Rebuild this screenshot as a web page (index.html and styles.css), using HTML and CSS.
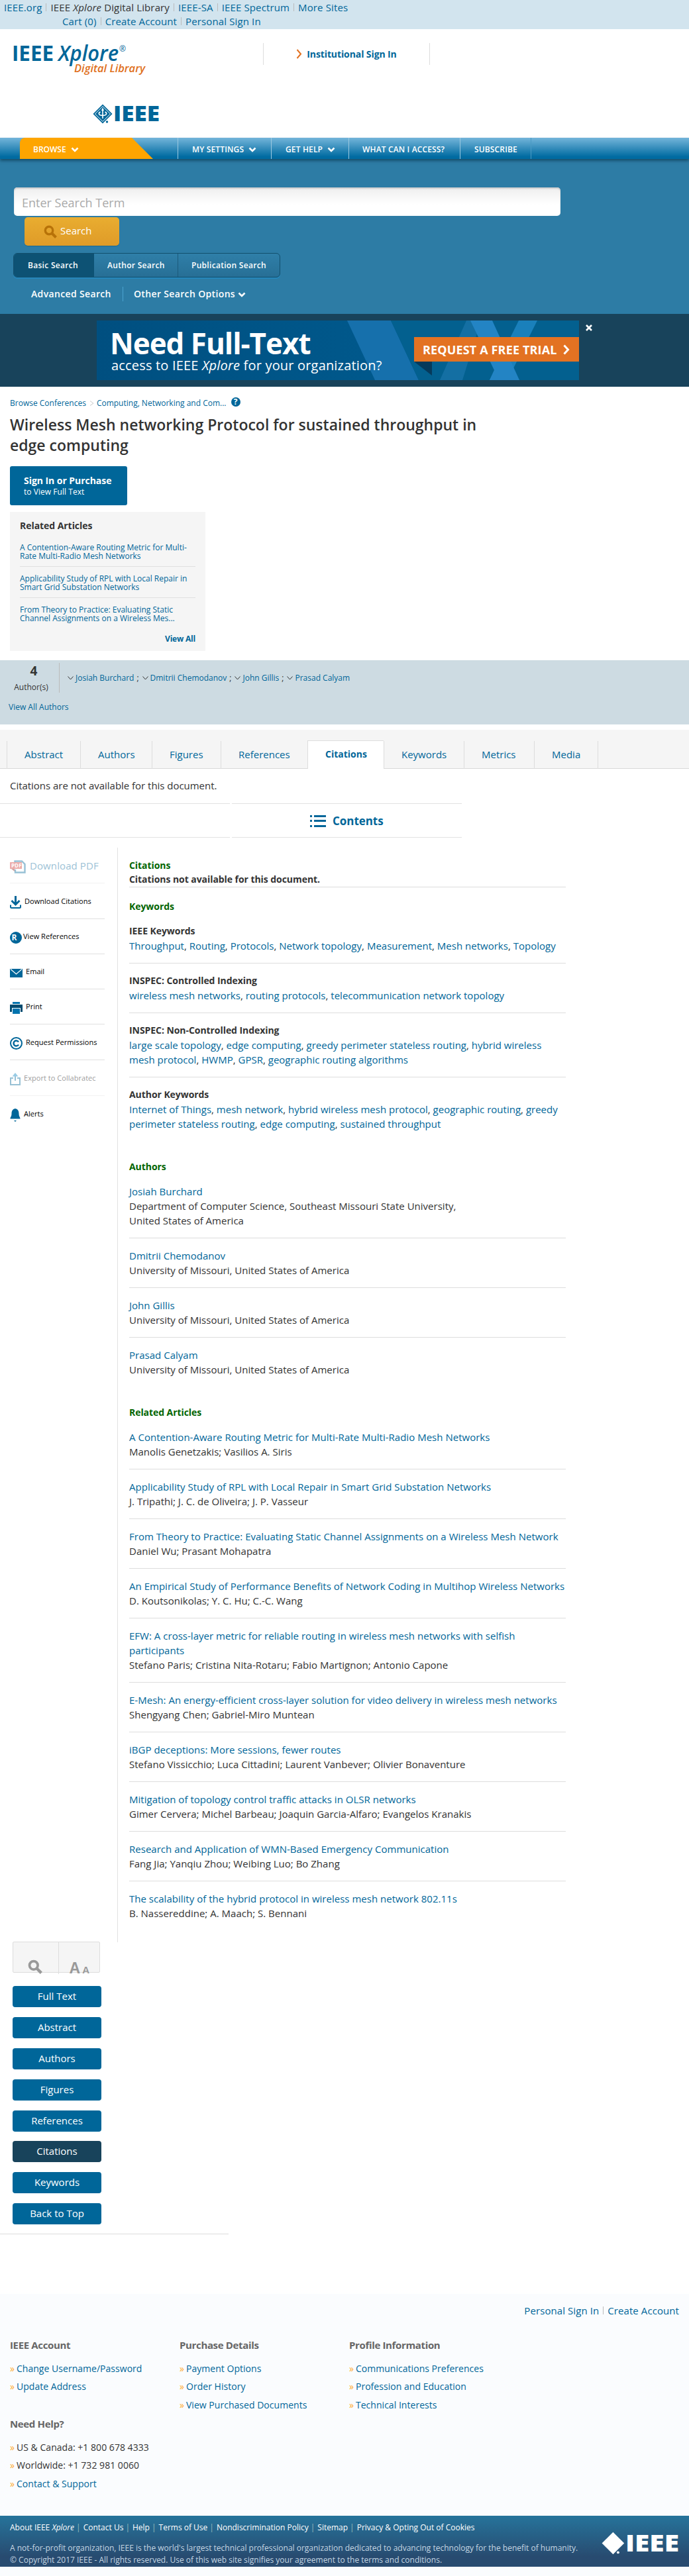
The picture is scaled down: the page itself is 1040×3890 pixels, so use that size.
FILE: index.html
```
<!DOCTYPE html>
<html lang="en">
<head>
<meta charset="utf-8">
<title>IEEE Xplore - Wireless Mesh networking Protocol</title>
<link rel="stylesheet" href="styles.css">
</head>
<body>
<svg width="0" height="0" class="defs">
  <symbol id="kite" viewBox="0 0 30 30">
    <path d="M15 0.5 29.500 15 15 29.500 0.500 15Z" fill="currentColor"/>
    <path class="kite" d="M15 3.500 26.500 15 15 26.500 3.500 15Z"/>
    <path class="kite thick" d="M15 7.500V22M11.500 12C8 13.500 8.500 17.500 15 17.500S22 13.500 18.500 12"/>
    <path class="kite-fill" d="M15 5.500 17 10H13Z"/>
    <circle cx="21.500" cy="27" r="1.700" fill="currentColor"/>
  </symbol>
  <symbol id="chev" viewBox="0 0 12 8"><path d="M1.500 1.500 6 6 10.500 1.500" fill="none" stroke="currentColor" stroke-width="2.600"/></symbol>
  <symbol id="caret" viewBox="0 0 9 6"><path d="M.5 .5 4.500 5 8.500 .5" fill="none" stroke="currentColor"/></symbol>
  <symbol id="lens" viewBox="0 0 20 20"><circle cx="8" cy="8" r="5.700" fill="none" stroke="currentColor" stroke-width="3.400"/><path d="M12.500 12.500 18.500 18.500" stroke="currentColor" stroke-width="4"/></symbol>
</svg>

<div class="topbar">
  <ul class="links first">
    <li>IEEE.org</li><li class="dark"><span>IEEE <i>Xplore</i> Digital Library</span></li><li>IEEE-SA</li><li>IEEE Spectrum</li><li>More Sites</li>
  </ul>
  <ul class="links second">
    <li>Cart (0)</li><li>Create Account</li><li>Personal Sign In</li>
  </ul>
</div>

<header class="head">
  <div class="head-row">
    <svg class="xplore" width="204" height="52" viewBox="0 0 204 52">
      <text x="-2" y="27" font-size="33" font-weight="700" textLength="63" lengthAdjust="spacingAndGlyphs" fill="#069">IEEE</text>
      <text x="68" y="27" font-size="33" font-weight="600" font-style="italic" textLength="91" lengthAdjust="spacingAndGlyphs" fill="#069">Xplore</text>
      <text x="160" y="13" font-size="12" fill="#069">®</text>
      <text x="92" y="44" font-size="17" font-weight="600" font-style="italic" textLength="107" lengthAdjust="spacingAndGlyphs" fill="#e07020">Digital Library</text>
    </svg>
    <div class="inst">
      <svg width="9" height="15" viewBox="0 0 9 15"><path d="M1.500 1 7 7.500 1.500 14" fill="none" stroke="#e37222" stroke-width="2"/></svg>
      <b>Institutional Sign In</b>
    </div>
  </div>
  <svg class="ieee-logo" width="102" height="30" viewBox="0 0 102 30"><use href="#kite" width="30" height="30"/><text x="31" y="26" font-size="31" font-weight="800" textLength="70" lengthAdjust="spacingAndGlyphs" fill="currentColor">IEEE</text></svg>
</header>

<nav class="nav">
  <div class="browse">BROWSE <svg width="12" height="8"><use href="#chev"/></svg></div>
  <ul>
    <li>MY SETTINGS <svg width="12" height="8"><use href="#chev"/></svg></li>
    <li>GET HELP <svg width="12" height="8"><use href="#chev"/></svg></li>
    <li>WHAT CAN I ACCESS?</li>
    <li>SUBSCRIBE</li>
  </ul>
</nav>

<section class="search">
  <div class="field">Enter Search Term</div>
  <div class="go"><svg width="20" height="20"><use href="#lens"/></svg>Search</div>
  <ul class="modes"><li class="on">Basic Search</li><li>Author Search</li><li>Publication Search</li></ul>
  <div class="more"><span>Advanced Search</span><span>Other Search Options <svg width="12" height="8"><use href="#chev"/></svg></span></div>
</section>

<section class="banner">
  <div class="ad">
    <svg class="ad-art" width="728" height="90" viewBox="0 0 728 90">
      <path d="M378 0H444L486 90H420Z" fill="#1670ac"/>
      <path d="M444 0H728V90H486Z" fill="#03608f"/>
      <path d="M558 0H580L552 90H518Z" fill="#146fa3"/>
      <path d="M637 0H665L620 90H593L600 75Z" fill="#1a80bb"/>
      <path d="M564 0H597L638 90H593L600 75Z" fill="#2384c4"/>
      <path d="M479 62H506V83Z" fill="#063a5b"/>
    </svg>
    <div class="ad-text">
      <div class="ad-title">Need Full-Text</div>
      <div class="ad-sub">access to IEEE <i>Xplore</i> for your organization?</div>
    </div>
    <div class="ad-cta">REQUEST A FREE TRIAL <svg width="10" height="16" viewBox="0 0 10 16"><path d="M1.500 1.500 7.500 8 1.500 14.500" fill="none" stroke="#fff" stroke-width="3"/></svg></div>
  </div>
  <svg class="close" width="10" height="10" viewBox="0 0 10 10"><path d="M1 1 9 9M9 1 1 9" stroke="#fff" stroke-width="2.600"/></svg>
</section>

<section class="doc">
  <div class="crumbs"><a>Browse Conferences</a><svg width="7" height="8" viewBox="0 0 7 8"><path d="M1 .5 6 4 1 7.500" fill="none" stroke="#ccc"/></svg><a>Computing, Networking and Com...</a><span class="help">?</span></div>
  <h1>Wireless Mesh networking Protocol for sustained throughput in<br>edge computing</h1>
  <div class="buy"><b>Sign In or Purchase</b><span>to View Full Text</span></div>
  <div class="related">
    <h2>Related Articles</h2>
    <a>A Contention-Aware Routing Metric for Multi-<br>Rate Multi-Radio Mesh Networks</a>
    <a>Applicability Study of RPL with Local Repair in<br>Smart Grid Substation Networks</a>
    <a>From Theory to Practice: Evaluating Static<br>Channel Assignments on a Wireless Mes...</a>
    <b>View All</b>
  </div>
</section>

<section class="authors">
  <div class="authors-row">
    <div class="count"><b>4</b><span>Author(s)</span></div>
    <div class="names">
      <svg width="9" height="6"><use href="#caret"/></svg><a>Josiah Burchard</a><i>;</i>
      <svg width="9" height="6"><use href="#caret"/></svg><a>Dmitrii Chemodanov</a><i>;</i>
      <svg width="9" height="6"><use href="#caret"/></svg><a>John Gillis</a><i>;</i>
      <svg width="9" height="6"><use href="#caret"/></svg><a>Prasad Calyam</a>
    </div>
  </div>
  <a class="all">View All Authors</a>
</section>

<ul class="tabs"><li>Abstract</li><li>Authors</li><li>Figures</li><li>References</li><li class="on">Citations</li><li>Keywords</li><li>Metrics</li><li>Media</li></ul>
<p class="none">Citations are not available for this document.</p>

<div class="contents">
  <div></div>
  <div><svg width="24" height="18" viewBox="0 0 24 18"><path d="M0 1.500H3M6 1.500H24M0 8.500H3M6 8.500H24M0 16.500H3M6 16.500H24" stroke="#069" stroke-width="3"/></svg><b>Contents</b></div>
</div>

<div class="body">
  <aside class="tools">
    <div class="tool pdf faded"><svg width="24" height="20" viewBox="0 0 24 20"><path d="M7.500 3V1.500H18L22.500 6V18.500H8V14" fill="none" stroke="#069" stroke-width="2.400"/><path d="M0 3H18V13H0Z" fill="#d0312d"/><path d="M2 13H7V17Z" fill="#8d1f1c"/><text x="2" y="11" font-size="8" font-weight="700" fill="#fff">PDF</text></svg>Download PDF</div>
    <div class="tool"><svg width="17" height="19" viewBox="0 0 17 19"><path d="M8.500 0V12M2.500 7 8.500 13 14.500 7" fill="none" stroke="#069" stroke-width="3"/><path d="M1 13.500V17Q1 18 2.500 18H14.500Q16 18 16 17V13.500" fill="none" stroke="#069" stroke-width="2"/></svg>Download Citations</div>
    <div class="tool s t2"><svg width="18" height="18" viewBox="0 0 18 18"><circle cx="9" cy="9" r="9" fill="#069"/><text x="2.500" y="13" font-size="12" font-weight="700" fill="#fff">R</text></svg>View References</div>
    <div class="tool s"><svg width="19" height="13" viewBox="0 0 19 13"><path d="M0 0H19V13H0Z" fill="#069"/><path d="M1 .5 9.500 8 18 .5" fill="none" stroke="#fff" stroke-width="1.200"/></svg>Email</div>
    <div class="tool s"><svg width="19" height="18" viewBox="0 0 19 18"><path d="M4 0H15V3H4Z" fill="#0073ae"/><path d="M0 4H19V15H16V9H3V15H0Z" fill="#004b70"/><path d="M4 10H15V18H4Z" fill="#0073ae"/></svg>Print</div>
    <div class="tool"><svg width="19" height="19" viewBox="0 0 19 19"><circle cx="9.500" cy="9.500" r="8.500" fill="none" stroke="#069" stroke-width="2"/><path d="M13 7.500A4 4 0 1 0 13 11.500" fill="none" stroke="#069" stroke-width="2.400"/></svg>Request Permissions</div>
    <div class="tool faded"><svg width="16" height="19" viewBox="0 0 16 19"><path d="M5 8H1V18H15V8H11" fill="none" stroke="#069" stroke-width="2"/><path d="M8 3V12" stroke="#069" stroke-width="2"/><path d="M8 0 12.500 5.500H3.500Z" fill="#0080c0"/></svg>Export to Collabratec</div>
    <div class="tool last"><svg width="16" height="20" viewBox="0 0 16 20"><path d="M8 0C3.500 1 2.500 4 2.500 8 2.500 12 .5 13 .5 15.500H15.500C15.500 13 13.500 12 13.500 8 13.500 4 12.500 1 8 0Z" fill="#069"/><path d="M6 18H10L8 20Z" fill="#069"/></svg>Alerts</div>
  </aside>

  <main class="main">
    <div class="cit"><h3>Citations</h3><b>Citations not available for this document.</b></div>
    <h3 class="kw">Keywords</h3>
    <div class="item"><h4>IEEE Keywords</h4><p><a>Throughput</a>, <a>Routing</a>, <a>Protocols</a>, <a>Network topology</a>, <a>Measurement</a>, <a>Mesh networks</a>, <a>Topology</a></p></div>
    <div class="item"><h4>INSPEC: Controlled Indexing</h4><p><a>wireless mesh networks</a>, <a>routing protocols</a>, <a>telecommunication network topology</a></p></div>
    <div class="item"><h4>INSPEC: Non-Controlled Indexing</h4><p><a>large scale topology</a>, <a>edge computing</a>, <a>greedy perimeter stateless routing</a>, <a>hybrid wireless<br>mesh protocol</a>, <a>HWMP</a>, <a>GPSR</a>, <a>geographic routing algorithms</a></p></div>
    <div class="item end"><h4>Author Keywords</h4><p><a>Internet of Things</a>, <a>mesh network</a>, <a>hybrid wireless mesh protocol</a>, <a>geographic routing</a>, <a>greedy<br>perimeter stateless routing</a>, <a>edge computing</a>, <a>sustained throughput</a></p></div>
    <h3>Authors</h3>
    <div class="item"><a>Josiah Burchard</a><p>Department of Computer Science, Southeast Missouri State University,<br>United States of America</p></div>
    <div class="item"><a>Dmitrii Chemodanov</a><p>University of Missouri, United States of America</p></div>
    <div class="item"><a>John Gillis</a><p>University of Missouri, United States of America</p></div>
    <div class="item end"><a>Prasad Calyam</a><p>University of Missouri, United States of America</p></div>
    <h3>Related Articles</h3>
    <div class="item"><a>A Contention-Aware Routing Metric for Multi-Rate Multi-Radio Mesh Networks</a><p>Manolis Genetzakis; Vasilios A. Siris</p></div>
    <div class="item"><a>Applicability Study of RPL with Local Repair in Smart Grid Substation Networks</a><p>J. Tripathi; J. C. de Oliveira; J. P. Vasseur</p></div>
    <div class="item"><a>From Theory to Practice: Evaluating Static Channel Assignments on a Wireless Mesh Network</a><p>Daniel Wu; Prasant Mohapatra</p></div>
    <div class="item"><a>An Empirical Study of Performance Benefits of Network Coding in Multihop Wireless Networks</a><p>D. Koutsonikolas; Y. C. Hu; C.-C. Wang</p></div>
    <div class="item"><a>EFW: A cross-layer metric for reliable routing in wireless mesh networks with selfish<br>participants</a><p>Stefano Paris; Cristina Nita-Rotaru; Fabio Martignon; Antonio Capone</p></div>
    <div class="item"><a>E-Mesh: An energy-efficient cross-layer solution for video delivery in wireless mesh networks</a><p>Shengyang Chen; Gabriel-Miro Muntean</p></div>
    <div class="item"><a>iBGP deceptions: More sessions, fewer routes</a><p>Stefano Vissicchio; Luca Cittadini; Laurent Vanbever; Olivier Bonaventure</p></div>
    <div class="item"><a>Mitigation of topology control traffic attacks in OLSR networks</a><p>Gimer Cervera; Michel Barbeau; Joaquin Garcia-Alfaro; Evangelos Kranakis</p></div>
    <div class="item"><a>Research and Application of WMN-Based Emergency Communication</a><p>Fang Jia; Yanqiu Zhou; Weibing Luo; Bo Zhang</p></div>
    <div class="item final"><a>The scalability of the hybrid protocol in wireless mesh network 802.11s</a><p>B. Nassereddine; A. Maach; S. Bennani</p></div>
  </main>
</div>

<div class="jump">
  <div class="zoomer">
    <div><svg width="22" height="22" viewBox="0 0 20 20"><use href="#lens"/></svg></div>
    <div><b>A</b><b class="sm">A</b></div>
  </div>
  <a>Full Text</a><a>Abstract</a><a>Authors</a><a>Figures</a><a>References</a><a class="on">Citations</a><a>Keywords</a><a>Back to Top</a>
</div>

<footer class="foot">
  <ul class="links right"><li>Personal Sign In</li><li>Create Account</li></ul>
  <div class="cols">
    <div><h5>IEEE Account</h5><a>Change Username/Password</a><a>Update Address</a></div>
    <div><h5>Purchase Details</h5><a>Payment Options</a><a>Order History</a><a>View Purchased Documents</a></div>
    <div><h5>Profile Information</h5><a>Communications Preferences</a><a>Profession and Education</a><a>Technical Interests</a></div>
    <div><h5>Need Help?</h5><a class="dark">US &amp; Canada: +1 800 678 4333</a><a class="dark">Worldwide: +1 732 981 0060</a><a>Contact &amp; Support</a></div>
  </div>
</footer>
<div class="legal">
  <div>
    <ul><li>About IEEE <i>Xplore</i></li><li>Contact Us</li><li>Help</li><li>Terms of Use</li><li>Nondiscrimination Policy</li><li>Sitemap</li><li>Privacy &amp; Opting Out of Cookies</li></ul>
    <p>A not-for-profit organization, IEEE is the world's largest technical professional organization dedicated to advancing technology for the benefit of humanity.<br>© Copyright 2017 IEEE - All rights reserved. Use of this web site signifies your agreement to the terms and conditions.</p>
  </div>
  <svg class="legal-logo" width="117" height="35" viewBox="0 0 101 30"><use href="#kite" width="30" height="30"/><text x="31" y="26" font-size="31" font-weight="800" textLength="70" lengthAdjust="spacingAndGlyphs" fill="currentColor">IEEE</text></svg>
</div>
<div class="tail"></div>
</body>
</html>
```
FILE: styles.css
```
* { box-sizing: border-box; margin: 0; padding: 0; }
body { width: 1040px; height: 3890px; font: 15px/22px "Open Sans", "Noto Sans", sans-serif; color: #333; background: #fff; white-space: nowrap; }
ul { list-style: none; }
a { color: #069; }
b, h2, h3, h4, h5 { font-weight: 700; }
svg { flex: none; overflow: visible; }
svg text { font-family: "Open Sans", sans-serif; }
.defs { display: block; }
.kite { fill: none; stroke: #fff; stroke-width: 1; }
.thick { stroke-width: 1.6; }
.kite-fill { fill: #fff; }

.topbar { height: 44px; background: #d2e4ee; padding-left: 6px; }
.links { display: flex; color: #069; line-height: 22px; letter-spacing: .08px; }
.links li { display: flex; align-items: center; }
.links li + li::before { content: ""; width: 1px; height: 12px; background: #bbb; margin: 0 6px; }
.links .dark, .dark { color: #333; }
.first { letter-spacing: .13px; }
.second { padding-left: 88px; margin-top: -1px; letter-spacing: .13px; }

.head { height: 165px; padding-top: 21px; }
.head-row { display: flex; height: 52px; padding-left: 20px; }
.inst { display: flex; justify-content: center; align-items: center; gap: 7px; margin: 0 0 0 173px; width: 252px; height: 33px; border: solid #ddd; border-width: 0 1px; font-size: 14px; color: #069; letter-spacing: -.1px; }
.ieee-logo { display: block; margin: 40px 0 0 140px; color: #069; }

.nav { display: flex; height: 32px; margin-top: -1px; background: linear-gradient(#74b5da, #006ba1 90%); color: #fff; font-weight: 600; font-size: 12px; line-height: 35px; letter-spacing: .15px; box-shadow: 0 3px 4px rgba(0,40,60,.5); position: relative; }
.nav svg { margin-left: 4px; }
.browse { margin-left: 30px; padding-left: 20px; width: 238px; background: #fea500; clip-path: polygon(0 0, 169px 0, 201px 100%, 0 100%); border-top-left-radius: 8px; letter-spacing: 0; }
.nav ul { display: flex; }
.nav li { border-left: 1px solid #9cc9e0; padding: 0 0 0 21px; width: 141px; }
.nav li:nth-child(2) { width: 117px; }
.nav li:nth-child(3) { width: 168px; padding-left: 20px; }
.nav li:nth-child(4) { width: 108px; border-right: 1px solid #4b9bc4; }

.search { height: 234px; background: #2d7ca5; padding: 43px 0 0 20px; color: #fff; }
.field { margin-left: 1px; width: 825px; height: 43px; border-radius: 5px; background: linear-gradient(#eee, #fff 60%); box-shadow: inset 0 2px 2px #ccc; padding-left: 12px; font-size: 18px; line-height: 46px; color: #aaa; }
.go { display: flex; align-items: center; gap: 5px; margin: 2px 0 0 17px; width: 143px; height: 43px; padding: 0 0 4px 29px; border-radius: 5px; background: linear-gradient(#e9ad30, #df9b28); box-shadow: 0 1px 1px #1f6a90; font-size: 15px; }
.go svg { color: #b77208; margin-top: 4px; }
.modes { display: flex; width: 403px; height: 37px; margin-top: 11px; border: 1px solid #124f6d; border-radius: 6px; background: linear-gradient(#2f7fa8, #276f96); box-shadow: 0 2px 0 #2587bb; font-weight: 600; font-size: 12px; line-height: 35px; overflow: hidden; letter-spacing: .3px; }
.modes li { padding-left: 21px; width: 121px; }
.modes li:nth-child(2) { padding-left: 20px; width: 127px; border-right: 1px solid #1b5a7b; }
.modes li:nth-child(3) { padding-left: 20px; }
.modes .on { background: #0d5274; }
.more { display: flex; margin: 14px 0 0 27px; height: 22px; font-weight: 600; font-size: 14px; line-height: 22px; letter-spacing: .35px; }
.more span:first-child { width: 139px; border-right: 1px solid #4aa3d0; }
.more span + span { padding-left: 16px; }

.banner { display: flex; height: 110px; background: #18435b; padding: 10px 0 0 146px; }
.ad { display: flex; position: relative; width: 728px; height: 90px; background: linear-gradient(90deg, #004f80, #005f94); color: #fff; overflow: hidden; }
.ad-art { position: absolute; left: 0; top: 0; }
.ad-text { position: relative; width: 479px; padding-left: 20px; }
.ad-title { font-size: 44px; font-weight: 700; line-height: 68px; letter-spacing: -1.05px; }
.ad-sub { font-size: 20px; line-height: 20px; margin: -10px 0 0 2px; letter-spacing: .18px; }
.ad-cta { position: relative; display: flex; align-items: center; gap: 9px; margin-top: 25px; width: 249px; height: 37px; background: #e37222; padding-left: 13px; font-size: 18px; font-weight: 700; letter-spacing: .15px; }
.close { margin: 6px 0 0 10px; }

.doc { padding: 16px 0 0 15px; height: 413px; }
.crumbs { display: flex; align-items: center; height: 18px; font-size: 12px; }
.crumbs svg { margin: 0 4px 0 5px; }
.help { width: 14px; height: 14px; border-radius: 7px; background: #069; color: #fff; font-weight: 700; line-height: 14px; text-align: center; margin: -4px 0 0 7px; }
h1 { font-size: 23px; font-weight: 600; line-height: 31px; margin-top: 8px; letter-spacing: 0; }
.buy { margin-top: 16px; width: 177px; height: 59px; border-radius: 3px; background: #069; color: #fff; padding: 14px 0 0 21px; }
.buy b, .buy span { display: block; font-size: 14px; line-height: 16px; letter-spacing: -.05px; }
.buy span { font-size: 12px; letter-spacing: .05px; line-height: 18px; }
.related { margin-top: 10px; width: 295px; height: 210px; background: #f5f5f5; padding: 10px 15px; font-size: 12px; line-height: 13px; }
.related h2 { font-size: 14px; line-height: 22px; letter-spacing: -.05px; padding-bottom: 4px; }
.related a { display: block; height: 47px; padding-top: 11px; border-bottom: 1px solid #e0e0e0; }
.related a:nth-of-type(3) { border: 0; }
.related b { display: block; text-align: right; margin-top: 8px; color: #069; letter-spacing: -.2px; }

.authors { height: 97px; background: #cddbe2; padding: 4px 0 0 13px; font-size: 12px; }
.authors-row { display: flex; height: 45px; }
.count { width: 77px; border-right: 1px solid #bbb; text-align: center; padding-right: 13px; }
.count b, .count span { display: block; padding-left: 13px; }
.count span { padding-left: 5px; line-height: 20px; padding-top: 3px; }
.count b { font-size: 19px; line-height: 24px; }
.names { display: flex; align-items: center; padding: 0 0 0 12px; }
.names i { font-style: normal; margin: 0 5px 0 4px; }
.names svg { margin-right: 3px; }
.all { display: block; line-height: 20px; margin-top: 12px; }

.tabs { display: grid; grid-template-columns: 111px 108px 104px 131px 115px 121px 106px 97px; height: 59px; margin-top: 8px; padding: 17px 0 0 10px; background: #f5f5f5; box-shadow: inset 0 -1px #d8d8d8; color: #069; }
.tabs li { border-left: 1px solid #ddd; line-height: 40px; padding-left: 26px; }
.tabs li:last-child { border-right: 1px solid #ddd; }
.tabs .on { background: #fff; font-weight: 700; font-size: 14px; margin-top: -1px; border: solid #ddd; border-width: 1px 0 0 1px; }
.none { padding: 14px 0 0 15px; height: 52px; letter-spacing: -.03px; }
.contents { display: grid; grid-template-columns: 347px 347px; column-gap: 3px; height: 67px; }
.contents div { height: 52px; display: flex; align-items: center; gap: 10px; padding: 2px 0 0 118px; border: solid #e2e2e2; border-width: 1px 0; font-size: 17px; color: #069; letter-spacing: -.05px; }

.body { display: flex; }
.tools { width: 178px; height: 1653px; border-right: 1px solid #e2e2e2; padding-left: 15px; font-size: 11px; color: #000; }
.tool { display: flex; align-items: center; width: 143px; height: 54px; gap: 5px; border-bottom: 1px solid #e0e0e0; letter-spacing: .04px; }
.tool svg { margin-top: 4px; }
.tool.s { height: 53px; }
.tool.t2 { gap: 2px; }
.tool.pdf { font-size: 15px; color: #069; gap: 6px; letter-spacing: .1px; }
.faded { opacity: .4; }
.last { border: 0; }
.main { width: 676px; padding: 16px 0 0 17px; }
.cit { border-bottom: 1px solid #ddd; padding-bottom: 1px; }
.cit h3, .cit b { display: block; line-height: 21px; }
h3, h4, .cit b { font-size: 14px; letter-spacing: -.06px; }
h3 { color: #006400; }
.kw { margin-top: 18px; }
.item { padding: 15px 0; border-bottom: 1px solid #ddd; }
.item p { letter-spacing: .01px; }
.item > a { display: block; letter-spacing: .02px; }
.end { border: 0; margin-bottom: 28px; }
.final { border: 0; padding-bottom: 0; }

.jump { width: 345px; height: 442px; border-bottom: 1px solid #ddd; padding-left: 19px; margin-top: -1px; }
.zoomer { display: flex; width: 132px; height: 47px; margin-bottom: 20px; border: 1px solid #ddd; border-radius: 2px; background: #f5f5f5; color: #999; }
.zoomer div { flex: 1; display: flex; align-items: flex-end; padding-left: 22px; height: 48px; }
.zoomer div + div { border-left: 1px solid #ddd; padding-left: 16px; gap: 3px; align-items: baseline; }
.zoomer b { font: 700 23px/66px "Liberation Sans", sans-serif; margin-top: 6px; }
.zoomer b.sm { font-size: 15px; }
.jump a { display: block; width: 134px; height: 32px; margin-bottom: 14.9px; border-radius: 4px; background: #069; color: #fff; font-size: 15px; line-height: 31px; text-align: center; }
.jump a.on { background: #18435b; }

.foot { margin-top: 90px; height: 335px; background: #fafcfe; padding: 14px 15px 0; }
.right { justify-content: flex-end; }
.cols { display: grid; grid-template-columns: 256px 256px 256px; margin-top: 30px; font-size: 14px; }
.cols > div { height: 119px; }
h5 { font-size: 15px; line-height: 22px; color: #666; letter-spacing: -.35px; margin-bottom: 11px; }
.cols a { display: flex; align-items: center; height: 27.5px; letter-spacing: .03px; }
.cols a::before { content: "»"; color: #fda92e; font-size: 14px; margin-right: 3px; }

.legal { display: flex; justify-content: space-between; height: 77px; padding: 7px 15px 0; background: linear-gradient(#26749b, #284b70 80%); color: #c5d6e2; font-size: 12px; line-height: 18px; }
.legal ul { display: flex; color: #fff; line-height: 22px; margin-bottom: 11px; }
.legal li { white-space: pre; }
.legal li + li::before { content: "|"; color: #9bb; margin: 0 4px 0 3px; }
.legal-logo { color: #fff; margin-top: 17px; }
.legal-logo .kite { stroke: #275e85; }
.tail { height: 14px; background: #fafcfe; }
```
